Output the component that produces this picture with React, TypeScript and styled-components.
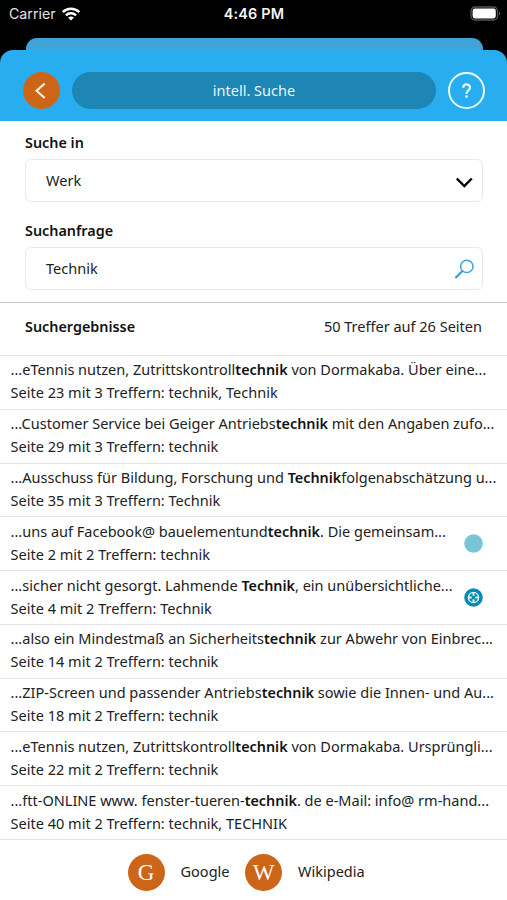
import React from "react";
import styled, { createGlobalStyle } from "styled-components";

const Global = createGlobalStyle`
  * { box-sizing: border-box; }
  body { margin: 0; background: #fff; }
`;

const Screen = styled.div`
  width: 507px;
  height: 900px;
  overflow: hidden;
  display: flex;
  flex-direction: column;
  background: #fff;
  color: #222;
  font-family: "Noto Sans", "Open Sans", sans-serif;
  font-size: 14.52px;
  line-height: 23px;
`;

const Top = styled.div`
  flex: none;
  height: 121px;
  background: #000;
  display: flex;
  flex-direction: column;
`;

const StatusBar = styled.div`
  height: 38px;
  padding: 0 6px 11px 9px;
  display: grid;
  grid-template-columns: 1fr auto 1fr;
  align-items: center;
  font-family: Inter, sans-serif;
  font-size: 14.2px;
  line-height: 20px;
  color: #e4e4e4;
`;

const Carrier = styled.div`
  display: flex;
  align-items: center;
  gap: 6px;
`;

const Clock = styled.div`
  font-weight: 600;
  font-size: 14.4px;
  letter-spacing: 0.2px;
  margin-right: 2px;
  color: #f4f4f4;
`;

const BatterySlot = styled.div`
  display: flex;
  justify-content: flex-end;
`;

const BackCard = styled.div`
  height: 12px;
  margin: 0 24.5px 0 25.5px;
  border-radius: 11px 11px 0 0;
  background: #40a4d9;
`;

const Header = styled.header`
  flex: 1;
  display: flex;
  align-items: center;
  gap: 12px;
  padding: 9px 22px 0 23px;
  border-radius: 13px 13px 0 0;
  background: #27adf0;
`;

const RoundIcon = styled.div`
  flex: none;
  width: 37px;
  height: 37px;
  border-radius: 50%;
  display: flex;
  align-items: center;
  justify-content: center;
  background: #cd6519;
  color: #fff;
`;

const HelpButton = styled(RoundIcon)`
  background: transparent;
  border: 2px solid #edfaff;
`;

const Title = styled.div`
  flex: 1;
  height: 37px;
  border-radius: 19px;
  background: #1d86b4;
  color: #e6f5fc;
  text-align: center;
  line-height: 37px;
`;

const Form = styled.section`
  flex: none;
  height: 182px;
  padding: 10px 24px 0 25px;
  border-bottom: 1px solid #c8c8c8;
`;

const Label = styled.div`
  font-weight: 600;
  font-size: 14.36px;
  color: #111;
  height: 28px;
`;

const Field = styled.div`
  height: 43px;
  margin-bottom: 17px;
  padding: 0 8px 0 20px;
  border: 1px solid #e9e9e9;
  border-radius: 6px;
  display: flex;
  align-items: center;
  justify-content: space-between;
`;

const Summary = styled.div`
  flex: none;
  height: 52px;
  padding: 0 25px 5px;
  display: flex;
  align-items: center;
  justify-content: space-between;
`;

const Heading = styled.div`
  font-weight: 600;
  font-size: 14.36px;
  color: #111;
`;

const Results = styled.div`
  flex: none;
  height: 484px;
  display: grid;
  grid-template-rows: repeat(9, 1fr);
`;

const Row = styled.div`
  border-top: 1px solid #e6e6e6;
  padding: 2.4px 10px 0 10.6px;
  display: flex;
  justify-content: space-between;
  white-space: nowrap;
`;

const Snippet = styled.div`
  b { font-weight: 600; font-size: 14.36px; color: #111; }
`;

const Marker = styled.div`
  width: 19px;
  height: 19px;
  margin: 14.6px 14px 0 0;
`;

const Footer = styled.footer`
  flex: 1;
  border-top: 1px solid #e6e6e6;
  display: flex;
  align-items: center;
  padding: 4px 0 0 127.5px;
`;

const Letter = styled(RoundIcon)`
  font-family: "Liberation Serif", serif;
  font-size: 23px;
  line-height: 37px;
`;

const LinkText = styled.div<{ $width: number }>`
  width: ${(p) => p.$width}px;
  padding: 0 0 2px 16px;
`;

type Result = { before: string; hit: string; after: string; info: string; marker?: "dot" | "wheel" };

const results: Result[] = [
  { before: "...eTennis nutzen, Zutrittskontroll", hit: "technik", after: " von Dormakaba. Über eine...", info: "Seite 23 mit 3 Treffern: technik, Technik" },
  { before: "...Customer Service bei Geiger Antriebs", hit: "technik", after: " mit den Angaben zufo...", info: "Seite 29 mit 3 Treffern: technik" },
  { before: "...Ausschuss für Bildung, Forschung und ", hit: "Technik", after: "folgenabschätzung u...", info: "Seite 35 mit 3 Treffern: Technik" },
  { before: "...uns auf Facebook@ bauelementund", hit: "technik", after: ". Die gemeinsam...", info: "Seite 2 mit 2 Treffern: technik", marker: "dot" },
  { before: "...sicher nicht gesorgt. Lahmende ", hit: "Technik", after: ", ein unübersichtliche...", info: "Seite 4 mit 2 Treffern: Technik", marker: "wheel" },
  { before: "...also ein Mindestmaß an Sicherheits", hit: "technik", after: " zur Abwehr von Einbrec...", info: "Seite 14 mit 2 Treffern: technik" },
  { before: "...ZIP-Screen und passender Antriebs", hit: "technik", after: " sowie die Innen- und Au...", info: "Seite 18 mit 2 Treffern: technik" },
  { before: "...eTennis nutzen, Zutrittskontroll", hit: "technik", after: " von Dormakaba. Ursprüngli...", info: "Seite 22 mit 2 Treffern: technik" },
  { before: "...ftt-ONLINE www. fenster-tueren-", hit: "technik", after: ". de e-Mail: info@ rm-hand...", info: "Seite 40 mit 2 Treffern: technik, TECHNIK" },
];

const Wifi = () => (
  <svg width="18" height="14" viewBox="0 0 18 14" fill="none" stroke="#fff" strokeWidth="2.5">
    <path d="M.8 5C5.3.6 12.7.6 17.2 5" />
    <path d="M3.9 8.3C6.7 5.6 11.3 5.6 14.1 8.3" />
    <path d="M9 13.4 6 10.5C7.7 9 10.3 9 12 10.5Z" fill="#fff" stroke="none" />
  </svg>
);

const Battery = () => (
  <svg width="31" height="15" viewBox="0 0 31 15">
    <rect x="1" y="1" width="26.5" height="13" rx="4" fill="none" stroke="#555" strokeWidth="1.3" />
    <rect x="2.6" y="2.6" width="23.2" height="9.8" rx="2.3" fill="#fff" />
    <path d="M29 5.2Q31 7.5 29 9.8Z" fill="#666" />
  </svg>
);

const MarkerIcon = ({ kind }: { kind: "dot" | "wheel" }) => (
  <Marker>
    <svg width="19" height="19" viewBox="0 0 19 19" fill="none">
      <circle cx="9.5" cy="9.5" r="9.3" fill={kind === "dot" ? "#78c5d7" : "#078bb5"} />
      {kind === "wheel" && (
        <g stroke="#e3f7fb" strokeWidth="1.3">
          <circle cx="9.5" cy="9.5" r="5.1" />
          <path d="M9.5 4.4v3.3M9.5 11.3v3.3M4.4 9.5h3.3M11.3 9.5h3.3" strokeWidth="1.9" />
        </g>
      )}
    </svg>
  </Marker>
);

export default function App() {
  return (
    <Screen>
      <Global />
      <Top>
        <StatusBar>
          <Carrier>Carrier <Wifi /></Carrier>
          <Clock>4:46 PM</Clock>
          <BatterySlot><Battery /></BatterySlot>
        </StatusBar>
        <BackCard />
        <Header>
          <RoundIcon>
            <svg width="37" height="37" viewBox="0 0 37 37" fill="none" stroke="#fff1df" strokeWidth="2.2">
              <path d="M21.7 11.5 13.6 18.7 21.7 26" />
            </svg>
          </RoundIcon>
          <Title>intell. Suche</Title>
          <HelpButton>
            <svg width="37" height="37" viewBox="0 0 37 37" fill="none" stroke="#edfaff" strokeWidth="2.5">
              <path d="M14.8 15.5C14.8 10.3 22.4 10.5 22.4 15C22.4 18.4 18.6 18.2 18.6 22.3" />
              <path d="M18.6 24v2.6" strokeWidth="2.7" />
            </svg>
          </HelpButton>
        </Header>
      </Top>
      <Form>
        <Label>Suche in</Label>
        <Field>
          Werk
          <svg width="20" height="20" viewBox="0 0 20 20" fill="none" stroke="#000" strokeWidth="2.4">
            <path d="m2.8 7.5 7.5 7.6 7.5-7.6" />
          </svg>
        </Field>
        <Label>Suchanfrage</Label>
        <Field>
          Technik
          <svg width="20" height="20" viewBox="0 0 20 20" fill="none" stroke="#42a5d4" strokeWidth="1.5">
            <circle cx="12.8" cy="7.4" r="6.2" />
            <path d="M8.4 12 1.4 19" strokeWidth="2" stroke="#3696d3" />
          </svg>
        </Field>
      </Form>
      <Summary>
        <Heading>Suchergebnisse</Heading>
        <div>50 Treffer auf 26 Seiten</div>
      </Summary>
      <Results>
        {results.map((r) => (
          <Row key={r.info}>
            <div>
              <Snippet>{r.before}<b>{r.hit}</b>{r.after}</Snippet>
              <div>{r.info}</div>
            </div>
            {r.marker && <MarkerIcon kind={r.marker} />}
          </Row>
        ))}
      </Results>
      <Footer>
        <Letter>G</Letter>
        <LinkText $width={80.5}>Google</LinkText>
        <Letter>W</Letter>
        <LinkText $width={90}>Wikipedia</LinkText>
      </Footer>
    </Screen>
  );
}
